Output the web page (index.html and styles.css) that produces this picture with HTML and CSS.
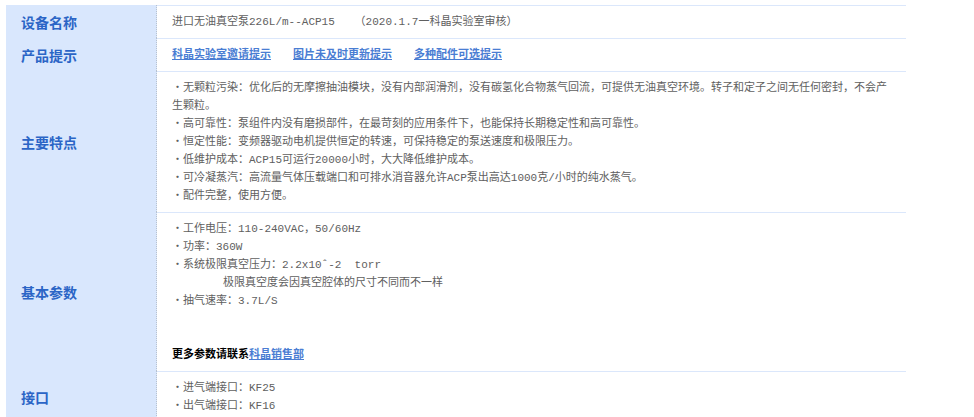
FILE: index.html
```html
<!DOCTYPE html>
<html lang="zh-CN">
<head>
  <meta charset="UTF-8">
  <title>进口无油真空泵 ACP15</title>
  <link rel="stylesheet" href="styles.css">
</head>
<body>

  <!-- 产品参数表 -->
  <table class="spec">
    <tr>
      <th>设备名称</th>
      <td>进口无油真空泵226L/m--ACP15&nbsp;&nbsp;&nbsp;（2020.1.7一科晶实验室审核）</td>
    </tr>
    <tr>
      <th>产品提示</th>
      <td class="tips">
        <a href="#" class="tip">科晶实验室邀请提示</a><a href="#" class="tip">图片未及时更新提示</a><a href="#" class="tip">多种配件可选提示</a>
      </td>
    </tr>
    <tr>
      <th>主要特点</th>
      <td>
        ・无颗粒污染：优化后的无摩擦抽油模块，没有内部润滑剂，没有碳氢化合物蒸气回流，可提供无油真空环境。转子和定子之间无任何密封，不会产生颗粒。<br>
        ・高可靠性：泵组件内没有磨损部件，在最苛刻的应用条件下，也能保持长期稳定性和高可靠性。<br>
        ・恒定性能：变频器驱动电机提供恒定的转速，可保持稳定的泵送速度和极限压力。<br>
        ・低维护成本：ACP15可运行20000小时，大大降低维护成本。<br>
        ・可冷凝蒸汽：高流量气体压载端口和可排水消音器允许ACP泵出高达1000克/小时的纯水蒸气。<br>
        ・配件完整，使用方便。
      </td>
    </tr>
    <tr>
      <th>基本参数</th>
      <td>
        ・工作电压：110-240VAC，50/60Hz<br>
        ・功率：360W<br>
        ・系统极限真空压力：2.2x10ˆ-2&nbsp;&nbsp;torr<br>
        <span class="indent">极限真空度会因真空腔体的尺寸不同而不一样</span><br>
        ・抽气速率：3.7L/S<br>
        <br>
        <br>
        <b class="more">更多参数请联系<a href="#">科晶销售部</a></b>
      </td>
    </tr>
    <tr>
      <th>接口</th>
      <td>
        ・进气端接口：KF25<br>
        ・出气端接口：KF16
      </td>
    </tr>
  </table>

</body>
</html>
```

FILE: styles.css
```css
body {
  margin: 0;
  padding: 5px 0 0 6px;
  background: #fff;
  font-family: "Noto Sans CJK SC", "DejaVu Sans", sans-serif;
}
.spec {
  width: 900px;
  border-collapse: separate;
  border-spacing: 0;
}
.spec th {
  width: 135px;
  padding: 0 0 0 15px;
  background: #d9e7fd;
  border-right: 1px dotted #b8c2cf;
  color: #2b65c6;
  font-size: 14px;
  font-weight: bold;
  text-align: left;
  vertical-align: middle;
}
.spec td {
  padding: 7px 15px 7px 15px;
  border-top: 1px solid #dbe7fb;
  color: #606060;
  font-family: "Liberation Mono", "Noto Sans CJK SC", monospace;
  font-size: 11px;
  line-height: 18px;
  vertical-align: top;
}
.tip {
  margin-right: 22px;
  color: #4a7dd3;
  font-weight: bold;
  text-decoration: underline;
}
.indent {
  padding-left: 51px;
}
.more {
  color: #000;
}
.more a {
  color: #4a7dd3;
  text-decoration: underline;
}
```
